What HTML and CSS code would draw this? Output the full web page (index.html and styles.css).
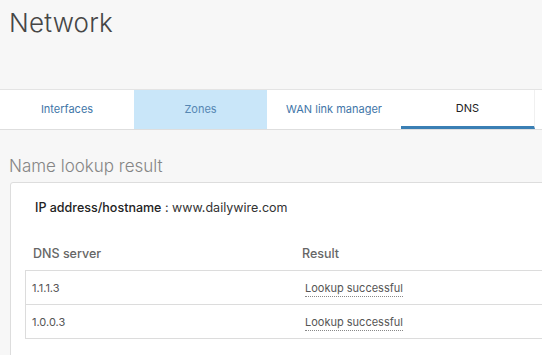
FILE: index.html
```html
<!DOCTYPE html>
<html>
<head>
<meta charset="utf-8">
<link rel="stylesheet" href="styles.css">
</head>
<body>
<div class="page">
  <header class="page-head">
    <h1 class="title">Network</h1>
  </header>
  <nav class="tabs">
    <div class="tab">Interfaces</div>
    <div class="tab tab-hover">Zones</div>
    <div class="tab">WAN link manager</div>
    <div class="tab tab-active">DNS</div>
    <div class="tab-rest"></div>
  </nav>
  <h2 class="section-title">Name lookup result</h2>
  <div class="card">
    <div class="host-line"><span class="host-label">IP address/hostname</span> : www.dailywire.com</div>
    <div class="table">
      <div class="thead">
        <div class="cell col-a">DNS server</div>
        <div class="cell col-b">Result</div>
      </div>
      <div class="tbody">
        <div class="row">
          <div class="cell col-a">1.1.1.3</div>
          <div class="cell col-b"><span class="status">Lookup successful</span></div>
        </div>
        <div class="row">
          <div class="cell col-a">1.0.0.3</div>
          <div class="cell col-b"><span class="status">Lookup successful</span></div>
        </div>
      </div>
    </div>
  </div>
</div>
</body>
</html>
```

FILE: styles.css
```css
html, body {
  margin: 0;
  padding: 0;
  background: #f7f7f7;
  overflow: hidden;
}
body {
  font-family: Inter, "Liberation Sans", sans-serif;
  color: #333;
}
.page {
  width: 542px;
  height: 355px;
  overflow: hidden;
}
.page-head {
  height: 89px;
  box-sizing: border-box;
  padding: 7px 0 0 9px;
}
.title {
  margin: 0;
  font-size: 26px;
  font-weight: 300;
  color: #464646;
  line-height: 32px;
  letter-spacing: 0.2px;
}
.tabs {
  display: flex;
  height: 41px;
  box-sizing: border-box;
  background: #fff;
  border-top: 1px solid #e4e4e4;
  border-bottom: 1px solid #dedede;
}
.tab {
  width: 134px;
  flex: none;
  display: flex;
  align-items: center;
  justify-content: center;
  font-size: 11px;
  color: #3f76a8;
  box-sizing: border-box;
  padding-bottom: 2px;
}
.tab-hover {
  background: #c9e6f9;
  color: #5687b3;
  width: 133px;
}
.tab-active {
  color: #222;
  border-bottom: 3px solid #3a7fb4;
  border-right: 1px solid #f0f0f0;
  padding-bottom: 0;
}
.tab-rest {
  flex: 1;
}
.section-title {
  margin: 0;
  padding: 25px 0 0 9px;
  height: 52px;
  box-sizing: border-box;
  font-size: 17px;
  font-weight: 300;
  color: #858585;
  line-height: 22px;
}
.card {
  margin-left: 10px;
  margin-right: -20px;
  background: #fff;
  border: 1px solid #dddddd;
  border-radius: 3px;
  padding: 16px 0 0 14px;
  height: 300px;
}
.host-line {
  padding-left: 10px;
  font-size: 12.5px;
  color: #333;
  line-height: 18px;
}
.host-label {
  font-weight: 500;
  color: #222;
}
.table {
  margin-top: 26px;
}
.thead {
  display: flex;
  height: 27px;
  box-sizing: border-box;
  padding-top: 2px;
  align-items: flex-start;
  font-size: 12.5px;
  font-weight: 500;
  color: #666;
}
.thead .cell {
  line-height: 18px;
}
.thead .col-a {
  padding-left: 8px;
}
.tbody {
  border-left: 1px solid #dcdcdc;
  border-top: 1px solid #dcdcdc;
}
.row {
  display: flex;
  height: 34px;
  box-sizing: border-box;
  border-bottom: 1px solid #dcdcdc;
  align-items: center;
  font-size: 11px;
  color: #555;
}
.col-a {
  width: 277px;
  flex: none;
  box-sizing: border-box;
}
.row .col-a {
  padding-left: 6px;
}
.col-b {
  flex: 1;
}
.row .col-b {
  padding-left: 2px;
}
.status {
  color: #555;
  border-bottom: 1px dotted #888;
  padding-bottom: 1px;
}
```
